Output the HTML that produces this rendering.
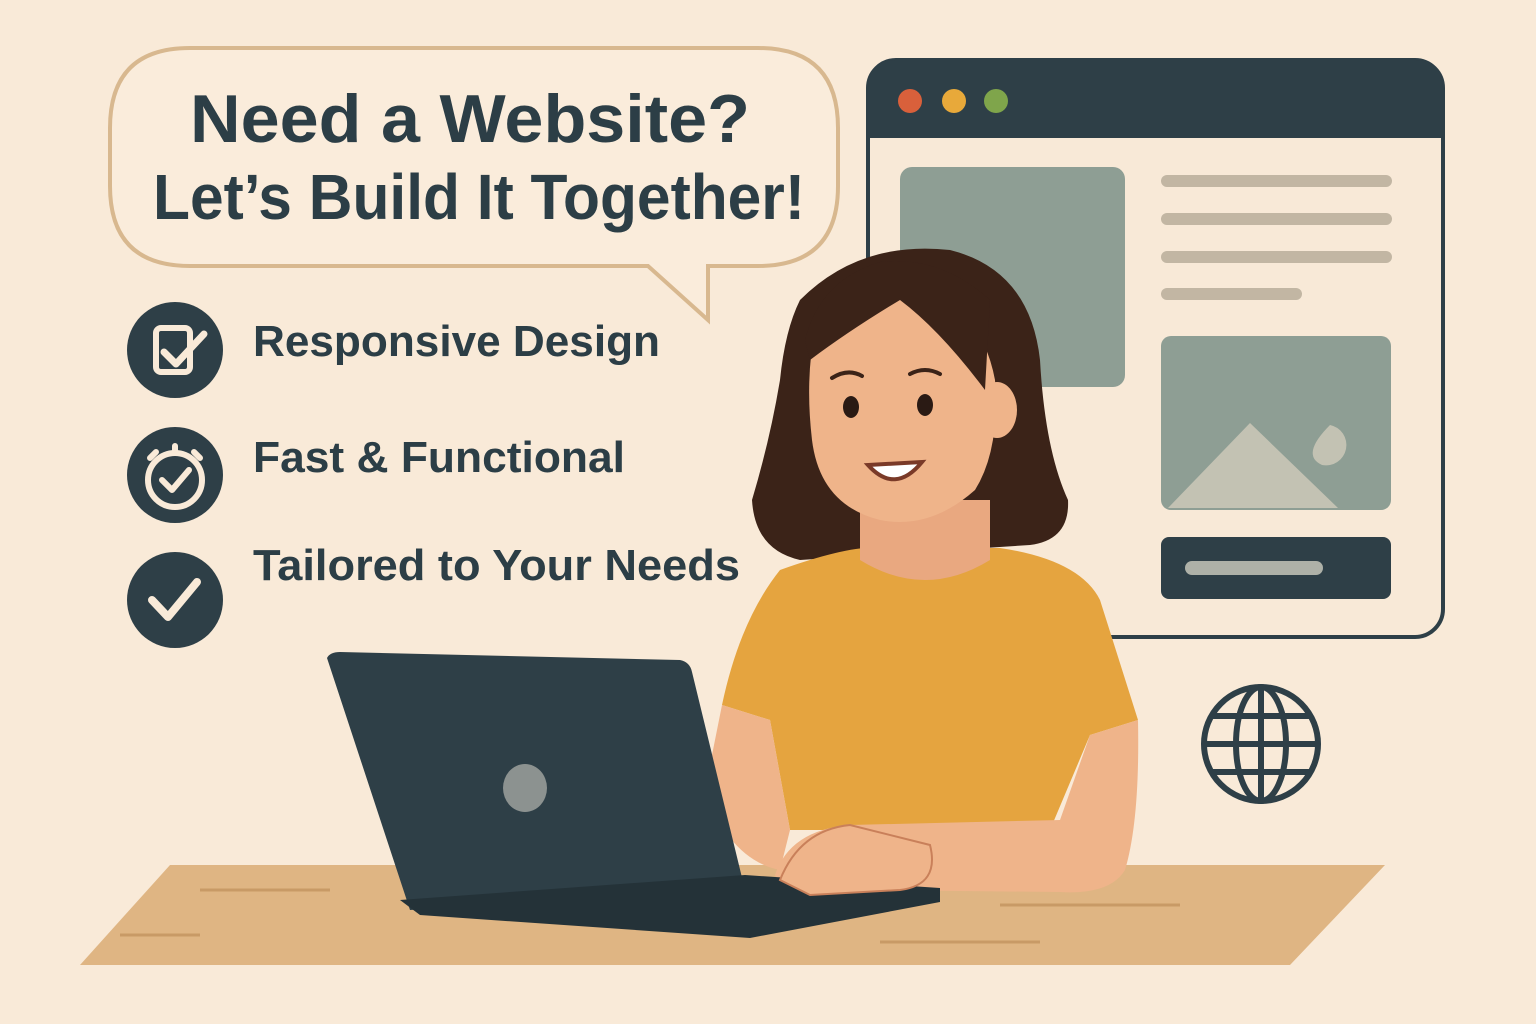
<!DOCTYPE html>
<html><head><meta charset="utf-8"><style>
html,body{margin:0;padding:0;background:#f9ead8;}
svg{display:block}
text{font-family:"Liberation Sans",sans-serif;font-weight:bold;fill:#2c3e46}
</style></head><body>
<svg width="1536" height="1024" viewBox="0 0 1536 1024" xmlns="http://www.w3.org/2000/svg">
<rect width="1536" height="1024" fill="#f9ead8"/>
<!-- speech bubble -->
<path d="M190 48 H758 Q838 48 838 128 V186 Q838 266 758 266 H708 V320 L648 266 H190 Q110 266 110 186 V128 Q110 48 190 48 Z" fill="#faecdb" stroke="#d8b88f" stroke-width="4"/>
<text x="190" y="142" font-size="68" textLength="560" lengthAdjust="spacingAndGlyphs">Need a Website?</text>
<text x="153" y="219" font-size="64" textLength="652" lengthAdjust="spacingAndGlyphs">Let’s Build It Together!</text>
<!-- checklist -->
<circle cx="175" cy="350" r="48" fill="#2e3f47"/>
<rect x="156" y="328" width="34" height="44" rx="5" fill="none" stroke="#f9ead8" stroke-width="6"/>
<path d="M164 352 L176 364 L204 334" fill="none" stroke="#f9ead8" stroke-width="7" stroke-linecap="round" stroke-linejoin="round"/>
<circle cx="175" cy="475" r="48" fill="#2e3f47"/>
<circle cx="175" cy="480" r="27" fill="none" stroke="#f9ead8" stroke-width="6"/>
<path d="M175 446 V452 M150 458 L156 452 M200 458 L194 452" stroke="#f9ead8" stroke-width="6" stroke-linecap="round"/>
<path d="M162 480 L172 490 L189 470" fill="none" stroke="#f9ead8" stroke-width="6" stroke-linecap="round" stroke-linejoin="round"/>
<circle cx="175" cy="600" r="48" fill="#2e3f47"/>
<path d="M152 600 L168 617 L197 582" fill="none" stroke="#f9ead8" stroke-width="8" stroke-linecap="round" stroke-linejoin="round"/>
<text x="253" y="356" font-size="44" textLength="407" lengthAdjust="spacingAndGlyphs">Responsive Design</text>
<text x="253" y="472" font-size="44" textLength="372" lengthAdjust="spacingAndGlyphs">Fast &amp; Functional</text>
<text x="253" y="580" font-size="44" textLength="487" lengthAdjust="spacingAndGlyphs">Tailored to Your Needs</text>
<!-- browser -->
<rect x="868" y="60" width="575" height="577" rx="28" fill="#f8e9d7" stroke="#2e3f47" stroke-width="4"/>
<path d="M896 60 H1415 Q1443 60 1443 88 V138 H868 V88 Q868 60 896 60Z" fill="#2e3f47"/>
<circle cx="910" cy="101" r="12" fill="#d9603b"/>
<circle cx="954" cy="101" r="12" fill="#e8a93a"/>
<circle cx="996" cy="101" r="12" fill="#7fa54b"/>
<rect x="900" y="167" width="225" height="220" rx="12" fill="#8e9e94"/>
<g stroke="#c2b6a3" stroke-width="12" stroke-linecap="round">
<line x1="1167" y1="181" x2="1386" y2="181"/><line x1="1167" y1="219" x2="1386" y2="219"/>
<line x1="1167" y1="257" x2="1386" y2="257"/><line x1="1167" y1="294" x2="1296" y2="294"/></g>
<rect x="1161" y="336" width="230" height="174" rx="10" fill="#8e9e94"/>
<path d="M1168 508 L1250 423 L1338 508Z" fill="#c3c2b3"/>
<path d="M1330 425 A18 18 0 1 1 1322 465 Q1300 455 1330 425Z" fill="#c3c2b3"/>
<rect x="1161" y="537" width="230" height="62" rx="8" fill="#2e3f47"/>
<line x1="1192" y1="568" x2="1316" y2="568" stroke="#aeb1a8" stroke-width="14" stroke-linecap="round"/>
<!-- globe -->
<g fill="none" stroke="#2e3f47" stroke-width="6">
<circle cx="1261" cy="744" r="57"/><ellipse cx="1261" cy="744" rx="25" ry="57"/>
<line x1="1261" y1="687" x2="1261" y2="801"/><line x1="1204" y1="744" x2="1318" y2="744"/>
<path d="M1212 716 H1310 M1212 772 H1310"/></g>
<!-- desk -->
<path d="M80 965 L170 865 H1385 L1290 965Z" fill="#dfb583"/>
<g stroke="#c89a66" stroke-width="3"><line x1="200" y1="890" x2="330" y2="890"/><line x1="1000" y1="905" x2="1180" y2="905"/><line x1="880" y1="942" x2="1040" y2="942"/><line x1="120" y1="935" x2="200" y2="935"/></g>
<!-- person: hair back -->
<path d="M800 300 Q860 240 950 250 Q1030 270 1040 360 Q1045 450 1068 500 Q1070 540 1030 545 L800 560 Q755 550 752 500 Q770 440 780 380 Q785 330 800 300Z" fill="#3b2318"/>
<!-- shirt / arms -->
<path d="M780 570 Q850 545 880 548 L1000 548 Q1080 560 1100 600 L1138 720 L1090 735 L1050 830 H790 L770 720 L722 705 Q740 620 780 570Z" fill="#e5a43f"/>
<path d="M770 720 L722 705 L705 790 Q730 860 780 870 L790 830Z" fill="#efb48a"/>
<path d="M1090 735 L1138 720 Q1140 820 1125 870 Q1110 895 1060 892 L860 890 Q790 900 775 875 Q790 830 850 825 L1060 820Z" fill="#efb48a"/>
<!-- neck & face -->
<path d="M860 500 H990 V560 Q925 600 860 560Z" fill="#e9a880"/>
<path d="M815 330 Q840 290 905 285 Q980 300 995 380 Q1000 450 975 490 Q930 530 880 520 Q820 505 812 440 Q805 380 815 330Z" fill="#efb48a"/>
<ellipse cx="997" cy="410" rx="20" ry="28" fill="#efb48a"/>
<path d="M810 360 Q850 330 900 300 Q940 330 985 390 L990 300 Q940 255 880 262 Q820 280 805 340Z" fill="#3b2318"/>
<ellipse cx="851" cy="407" rx="8" ry="11" fill="#2a1a14"/><ellipse cx="925" cy="405" rx="8" ry="11" fill="#2a1a14"/>
<path d="M832 378 Q848 368 862 376 M910 374 Q925 366 940 374" fill="none" stroke="#3b2318" stroke-width="4" stroke-linecap="round"/>
<path d="M868 465 Q895 495 922 462 Z" fill="#fff" stroke="#7a3a28" stroke-width="4"/>
<!-- laptop -->
<path d="M327 658 Q330 652 340 652 L680 660 Q690 662 692 672 L745 890 L410 910 Z" fill="#2e3f47"/>
<path d="M400 900 L745 875 L940 888 L940 902 L750 938 L420 915Z" fill="#243238"/>
<ellipse cx="525" cy="788" rx="22" ry="24" fill="#8c9290"/>
<!-- hand -->
<path d="M780 880 Q800 830 850 825 L930 845 Q940 885 900 890 L810 895Z" fill="#efb48a" stroke="#c9805a" stroke-width="2"/>
</svg>
</body></html>
